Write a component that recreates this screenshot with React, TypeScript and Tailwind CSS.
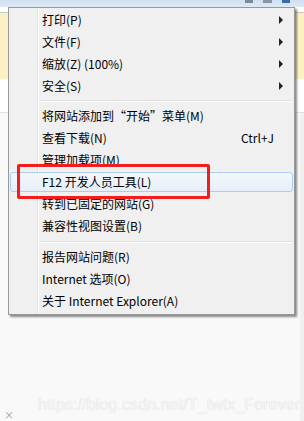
const font = { fontFamily: '"Noto Sans CJK SC", "Noto Sans", sans-serif' };

type Item = { label: string; shortcut?: string; sub?: boolean; active?: boolean };

const groups: Item[][] = [
  [
    { label: "打印(P)", sub: true },
    { label: "文件(F)", sub: true },
    { label: "缩放(Z) (100%)", sub: true },
    { label: "安全(S)", sub: true },
  ],
  [
    { label: "将网站添加到“开始”菜单(M)" },
    { label: "查看下载(N)", shortcut: "Ctrl+J" },
    { label: "管理加载项(M)" },
    { label: "F12 开发人员工具(L)", active: true },
    { label: "转到已固定的网站(G)" },
    { label: "兼容性视图设置(B)" },
  ],
  [
    { label: "报告网站问题(R)" },
    { label: "Internet 选项(O)" },
    { label: "关于 Internet Explorer(A)" },
  ],
];

function MenuRow({ item }: { item: Item }) {
  return (
    <div className="relative flex h-[22px] items-center">
      {item.active ? (
        <div className="absolute inset-x-[1px] inset-y-[1px] rounded-[3px] border border-[#aeccf1] bg-gradient-to-b from-[#f3f7fc] to-[#e6eef9]" />
      ) : null}
      <span className="relative pl-[33px] text-[12px] leading-none text-black">{item.label}</span>
      {item.shortcut ? (
        <span className="relative ml-auto pr-[20px] text-[12px] leading-none text-black">{item.shortcut}</span>
      ) : null}
      {item.sub ? (
        <span className="relative ml-auto mr-[11px] h-0 w-0 border-y-[4px] border-l-[4px] border-y-transparent border-l-[#222]" />
      ) : null}
    </div>
  );
}

function Separator({ h }: { h: string }) {
  return (
    <div className={`flex ${h} items-center pl-[30px] pr-[2px]`}>
      <div className="w-full border-t border-b border-t-[#e0e0e0] border-b-white" />
    </div>
  );
}

export default function App() {
  return (
    <div className="relative h-[421px] w-[304px] overflow-hidden bg-[#f9f9f9]" style={font}>
      {/* page behind the menu */}
      <div className="flex h-full flex-col">
        <div className="flex h-[7px] items-start justify-end gap-[10px] bg-gradient-to-b from-[#cfe0f1] to-[#dde9f5] pr-[14px]">
          <div className="h-[3px] w-[8px] bg-[#7d8a99]" />
          <div className="h-[3px] w-[9px] bg-[#8a96a4]" />
          <div className="h-[3px] w-[8px] bg-[#3c6aa8]" />
        </div>
        <div className="flex flex-1">
          <div className="flex flex-1 flex-col">
            <div className="h-[5px] bg-white" />
            <div className="h-[1px] bg-[#c8c8c8]" />
            <div className="h-[66px] bg-[#fbf1c2]" />
            <div className="h-[33px] bg-white" />
            <div className="h-[1px] bg-[#e2e2e2]" />
            <div className="flex flex-1">
              <div className="flex flex-1 flex-col justify-end bg-[#f9f9f9] pb-[8px]">
                <div
                  className="pl-[38px] text-[16px] leading-none tracking-[0.1px] text-[#f6f6f6]"
                  style={{ fontFamily: '"Liberation Sans", Arial, sans-serif', textShadow: "0 0 1px #cfcfcf" }}
                >
                  https://blog.csdn.net/T_twtx_Forever
                </div>
              </div>
              <div className="w-[14px] bg-[#f0f0f0]" />
            </div>
          </div>
          <div className="flex w-[8px] flex-col">
            <div className="h-[172px] bg-[#111]" />
            <div className="flex flex-1">
              <div className="w-[3px] bg-[#f0f0f0]" />
              <div className="flex-1 bg-gradient-to-r from-[#1e7fd8] to-[#1565c0]" />
            </div>
          </div>
        </div>
      </div>

      <div className="absolute bottom-[1px] left-[4px] text-[10px] leading-none text-[#9a9a9a]">×</div>

      {/* context menu */}
      <div className="absolute left-[8px] top-[7px] w-[287px] border border-[#979797] bg-[#f0f0f0] pt-[1px] pb-[2px] shadow-[2px_2px_2px_rgba(0,0,0,0.45)]">
        <div className="absolute bottom-0 left-[28px] top-0 w-[1px] bg-[#e2e3e3]" />
        <div className="absolute bottom-0 left-[29px] top-0 w-[1px] bg-white" />
        <div className="relative">
          {groups[0].map((it) => (
            <MenuRow key={it.label} item={it} />
          ))}
          <Separator h="h-[8px]" />
          {groups[1].map((it) => (
            <MenuRow key={it.label} item={it} />
          ))}
          <Separator h="h-[9px]" />
          {groups[2].map((it) => (
            <MenuRow key={it.label} item={it} />
          ))}
        </div>
      </div>

      {/* red annotation box */}
      <div className="absolute left-[17px] top-[164px] h-[35px] w-[193px] rounded-[2px] border-[3px] border-[#f41d1d]" />
    </div>
  );
}
